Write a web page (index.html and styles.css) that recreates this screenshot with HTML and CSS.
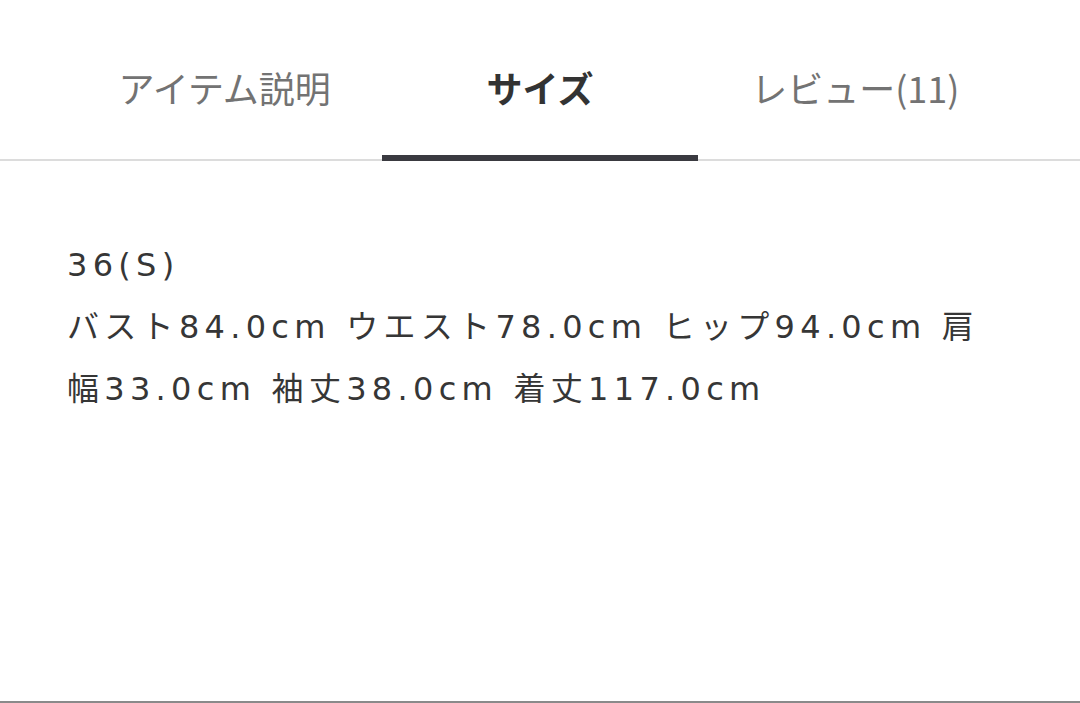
FILE: index.html
```html
<!DOCTYPE html>
<html lang="ja">
<head>
    <meta charset="utf-8">
    <title>サイズ</title>
    <link rel="stylesheet" href="styles.css">
</head>
<body>
    <div class="page">
        <nav class="tabs">
            <a class="tab">アイテム説明</a>
            <a class="tab active">サイズ</a>
            <a class="tab">レビュー(11)</a>
        </nav>

        <section class="size-info">
            <p>36(S)<br>バスト84.0cm ウエスト78.0cm ヒップ94.0cm 肩幅33.0cm 袖丈38.0cm 着丈117.0cm</p>
        </section>
    </div>
</body>
</html>
```

FILE: styles.css
```css
body {
    margin: 0;
    background-color: #fff;
    font-family: "Noto Sans CJK JP", "Noto Sans", sans-serif;
    color: #333;
}

.page {
    height: 701px;
    border-bottom: 2px solid #8a8a8a;
    display: flex;
    flex-direction: column;
}

.tabs {
    display: flex;
    padding: 0 67px;
    border-bottom: 2px solid #dcdcdc;
}

.tab {
    flex: 1;
    height: 161px;
    display: flex;
    align-items: center;
    justify-content: center;
    padding-top: 18px;
    box-sizing: border-box;
    font-size: 36px;
    color: #737373;
    margin-bottom: -2px;
    border-bottom: 6px solid transparent;
}

.tab.active {
    color: #333;
    font-weight: bold;
    border-bottom-color: #3a3a40;
}

.size-info {
    padding: 73px 67px 0;
}

.size-info p {
    margin: 0;
    font-family: "DejaVu Sans", "Noto Sans CJK JP", sans-serif;
    font-size: 32px;
    line-height: 62px;
    letter-spacing: 5.3px;
    color: #363636;
}
```
